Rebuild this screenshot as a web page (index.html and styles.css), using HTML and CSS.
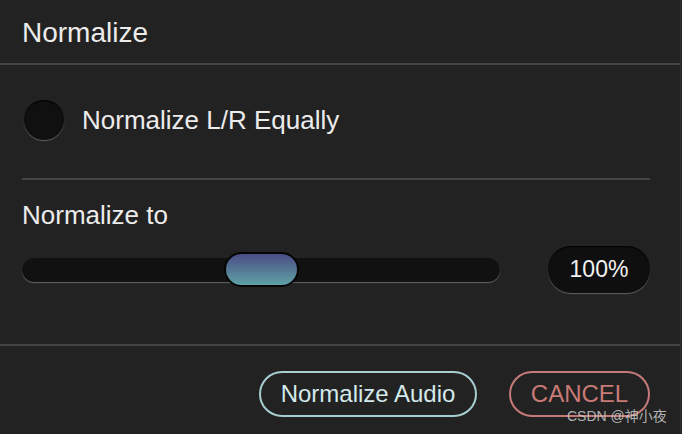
FILE: index.html
```html
<!DOCTYPE html>
<html>
<head>
<meta charset="utf-8">
<link rel="stylesheet" href="styles.css">
</head>
<body>
<div class="dialog">
  <header class="header">Normalize</header>
  <section class="section">
    <div class="option-row">
      <span class="check"></span>
      <span class="option-label">Normalize L/R Equally</span>
    </div>
  </section>
  <section class="section2">
    <div class="field-label">Normalize to</div>
    <div class="slider-row">
      <div class="track"><span class="thumb"></span></div>
      <div class="value">100%</div>
    </div>
  </section>
  <footer class="footer">
    <button class="btn btn-primary">Normalize Audio</button>
    <button class="btn btn-cancel">CANCEL</button>
  </footer>
  <div class="watermark">CSDN @神小夜</div>
</div>
</body>
</html>
```
FILE: styles.css
```css
* { box-sizing: border-box; }
html, body { margin: 0; padding: 0; background: #222222; }
body {
  font-family: "Liberation Sans", Arial, sans-serif;
  color: #ececec;
  width: 682px;
  height: 434px;
  overflow: hidden;
}
.dialog {
  position: relative;
  width: 682px;
  height: 434px;
  border-right: 2px solid #2b2b2b;
}
.header {
  height: 65px;
  padding: 17px 0 0 22px;
  font-size: 28px;
  line-height: 32px;
  border-bottom: 2px solid #434343;
}
.section {
  padding: 0 30px 0 22px;
}
.option-row {
  display: flex;
  align-items: center;
  gap: 18px;
  padding: 35px 0 38px 2px;
  border-bottom: 2px solid #454545;
}
.check {
  width: 40px;
  height: 40px;
  border-radius: 50%;
  background: #101010;
  box-shadow: inset 0 1px 1px #000, 0 1px 1px rgba(255,255,255,0.28);
  flex: none;
}
.option-label {
  font-size: 26px;
  line-height: 30px;
}
.section2 {
  padding: 20px 30px 51px 22px;
  border-bottom: 2px solid #434343;
}
.field-label {
  font-size: 26px;
  line-height: 30px;
}
.slider-row {
  margin-top: 16px;
  height: 47px;
  display: flex;
  align-items: center;
  gap: 48px;
}
.track {
  position: relative;
  flex: 1;
  height: 24px;
  border-radius: 12px;
  background: #111111;
  box-shadow: 0 1px 1px rgba(255,255,255,0.3);
}
.thumb {
  position: absolute;
  left: 202px;
  top: -5.5px;
  width: 75px;
  height: 35px;
  border-radius: 18px;
  border: 2px solid #050505;
  background: linear-gradient(#4b4c84, #5fa2a6);
}
.value {
  width: 102px;
  height: 47px;
  border-radius: 23px;
  background: #0f0f0f;
  box-shadow: inset 0 1px 1px #000, 0 1px 1px rgba(255,255,255,0.28);
  color: #f2f2f2;
  font-size: 23px;
  display: flex;
  align-items: center;
  justify-content: center;
}
.footer {
  display: flex;
  justify-content: flex-end;
  gap: 32px;
  padding: 25px 30px 0 22px;
}
.btn {
  height: 46px;
  border-radius: 23px;
  background: transparent;
  font-family: "Liberation Sans", Arial, sans-serif;
  font-size: 24px;
  padding: 0;
  border: 2px solid;
  line-height: 1;
  white-space: nowrap;
}
.btn-primary {
  width: 218px;
  color: #d3e9ea;
  border-color: #a6cdd0;
}
.btn-cancel {
  width: 141px;
  color: #c97a77;
  border-color: #c67a78;
}
.watermark {
  position: absolute;
  left: 567px;
  top: 406px;
  font-family: "Liberation Sans", "Noto Sans CJK SC", sans-serif;
  font-size: 14px;
  line-height: 20px;
  color: rgba(205,205,205,0.85);
  white-space: nowrap;
}
```
